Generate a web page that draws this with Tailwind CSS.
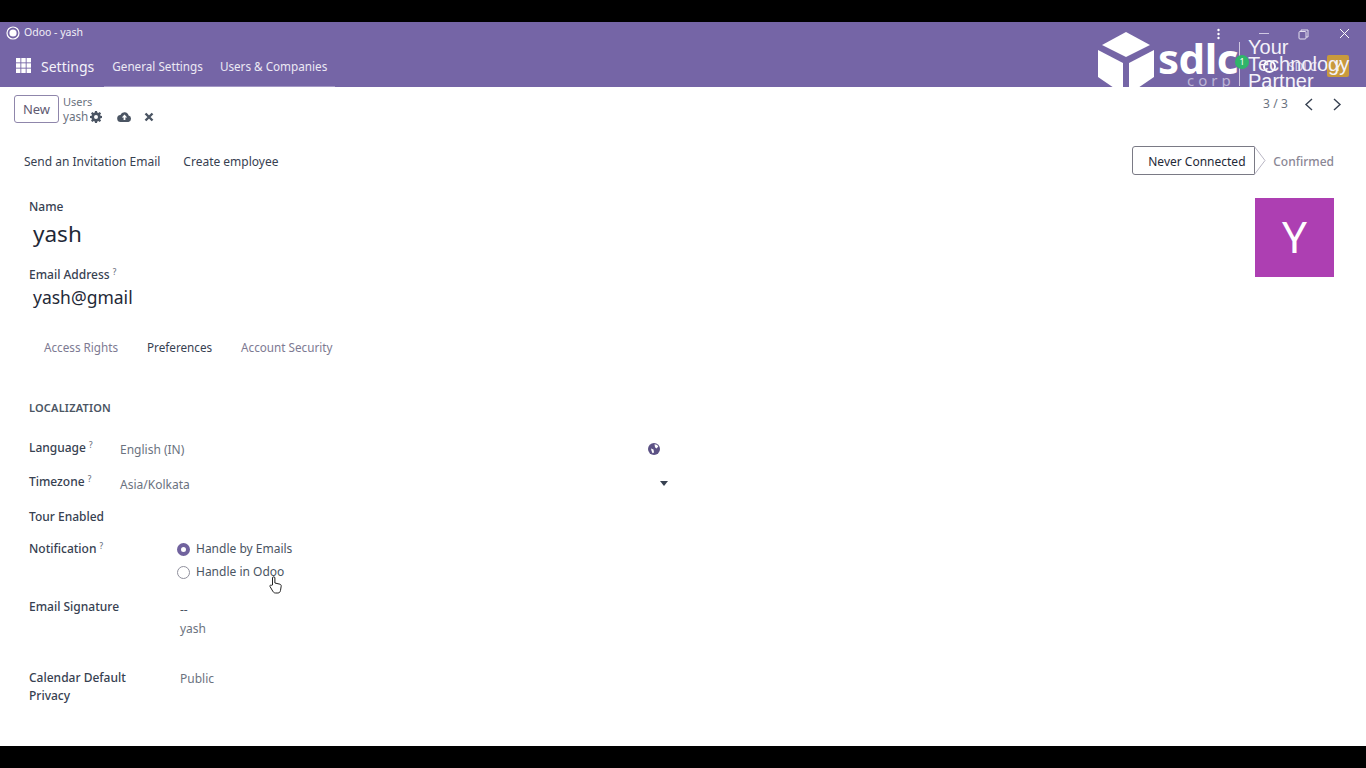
<!doctype html>
<html>
<head>
  <meta charset="UTF-8">
  <script src="https://cdn.jsdelivr.net/npm/@tailwindcss/browser@4"></script>
</head>
<body class="bg-black font-['Noto_Sans',sans-serif] text-[12px] text-[#374151]">
  <div class="w-[1366px] h-[768px] flex flex-col overflow-hidden">
    <div class="h-[22px] bg-black shrink-0"></div>

    <!-- title bar + odoo navbar -->
    <header class="relative h-[65px] shrink-0 bg-[#7565a6] text-white">
      <div class="h-[22px] flex items-center pl-[6px] gap-[4px] text-[10.5px] text-[#f1eef7]">
        <svg width="14" height="14" viewBox="0 0 14 14"><circle cx="7" cy="7" r="6" fill="none" stroke="#fff" stroke-width="1.2"/><circle cx="7" cy="7" r="3.6" fill="#fff"/></svg>
        <span>Odoo - yash</span>
      </div>
      <nav class="h-[43px] flex items-center pl-[16px] pt-[1px]">
        <svg class="-mt-[1px]" width="15" height="15" viewBox="0 0 15 15" fill="#fff">
          <rect x="0" y="0" width="4.4" height="4.4"/><rect x="5.3" y="0" width="4.4" height="4.4"/><rect x="10.6" y="0" width="4.4" height="4.4"/>
          <rect x="0" y="5.3" width="4.4" height="4.4"/><rect x="5.3" y="5.3" width="4.4" height="4.4"/><rect x="10.6" y="5.3" width="4.4" height="4.4"/>
          <rect x="0" y="10.6" width="4.4" height="4.4"/><rect x="5.3" y="10.6" width="4.4" height="4.4"/><rect x="10.6" y="10.6" width="4.4" height="4.4"/>
        </svg>
        <span class="ml-[10px] text-[14px] text-[#f4f2f9]">Settings</span>
        <span class="ml-[18px] text-[11.7px] pt-[1px] text-[#ece9f4]">General Settings</span>
        <span class="ml-[17px] text-[11.7px] pt-[1px] text-[#ece9f4]">Users &amp; Companies</span>
      </nav>
      <div class="absolute left-[104px] top-[64px] w-[231px] h-px bg-[#a297c4]"></div>

      <!-- window controls -->
      <svg class="absolute left-[1216px] top-[6px]" width="5" height="12" viewBox="0 0 5 12" fill="#fff"><circle cx="2.5" cy="2" r="1.2"/><circle cx="2.5" cy="6" r="1.2"/><circle cx="2.5" cy="10" r="1.2"/></svg>
      <div class="absolute left-[1259px] top-[11px] w-[10px] h-px bg-[#cfc8e2]"></div>
      <svg class="absolute left-[1298px] top-[7px]" width="11" height="11" viewBox="0 0 11 11" fill="none" stroke="#e4e0ef"><rect x="1" y="2.5" width="7" height="7.5" rx="1"/><path d="M3 2.5V1h7v7H8"/></svg>
      <svg class="absolute left-[1339px] top-[6px]" width="11" height="11" viewBox="0 0 11 11" stroke="#fff" stroke-width="1"><path d="M1 1l9 9M10 1l-9 9"/></svg>

      <!-- video watermark over the navbar -->
      <div class="absolute inset-0 overflow-hidden">
        <svg class="absolute left-[1097px] top-[10px]" width="58" height="58" viewBox="0 0 58 58" fill="#fff">
          <path d="M29 0L53 13 29 25 5 13z"/>
          <path d="M1 18l25 13v27H20L1 45z"/>
          <path d="M57 18L32 31v27h6l19-13z"/>
        </svg>
        <span class="absolute left-[1158px] top-[12px] text-[42px] leading-[48px] font-bold tracking-[-0.5px] text-white">sdlc</span>
        <span class="absolute left-[1187px] top-[49px] text-[15px] leading-[18px] tracking-[4px] text-[#bdb5d6]">corp</span>
        <div class="absolute left-[1239px] top-[20px] w-px h-[44px] bg-[#cfc8e2]"></div>
        <svg class="absolute left-[1262px] top-[37px]" width="15" height="15" viewBox="0 0 15 15" fill="none" stroke="#fff" stroke-width="2"><circle cx="7.5" cy="7.5" r="5.5"/></svg>
        <span class="absolute left-[1288px] top-[38px] text-[12px] leading-[14px] text-[#d9d4e8]">SDLC</span>
        <div class="absolute left-[1327px] top-[33px] w-[22px] h-[22px] rounded-[2px] bg-[#c99a3c] text-[13px] leading-[22px] text-center text-white">Y</div>
        <span class="absolute left-[1248px] top-[17px] text-[20px] leading-[17px] text-[#f4f2f9] font-['Liberation_Sans',sans-serif]">Your<br>Technology<br>Partner</span>
        <div class="absolute left-[1235px] top-[33px] w-[14px] h-[14px] rounded-full bg-[#2fb56a] text-[9px] leading-[14px] text-center text-white">1</div>
      </div>
    </header>

    <!-- page -->
    <main class="flex-1 bg-white relative">
      <!-- control panel -->
      <div class="h-[58px] flex items-start pl-[14px] pr-[24px] pt-[8px]">
        <button class="w-[45px] h-[28px] border border-[#8f86ab] rounded-[3px] text-[#5f5a72] text-[13px] pt-[1px]">New</button>
        <div class="ml-[4px] -mt-[1px] leading-[15px]">
          <div class="text-[11px] text-[#6b7280]">Users</div>
          <div class="flex items-center text-[11.7px] text-[#6b7280]">
            <span>yash</span>
            <svg class="ml-[2px]" width="12" height="12" viewBox="0 0 12 12" fill="#4b5563"><path fill-rule="evenodd" d="M5 0h2l.3 1.6 1 .4L9.7 1l1.4 1.4-1 1.4.4 1 1.5.2v2l-1.5.3-.4 1 1 1.3-1.4 1.4-1.4-1-1 .4L7 12H5l-.3-1.6-1-.4-1.3 1-1.4-1.4 1-1.3-.4-1L0 7V5l1.6-.2.4-1L1 2.4 2.4 1l1.3 1 1-.4zM6 4a2 2 0 100 4 2 2 0 000-4z"/></svg>
            <svg class="ml-[15px]" width="15" height="12" viewBox="0 0 15 12" fill="#4b5563"><path fill-rule="evenodd" d="M4 11a3.5 3.5 0 01-.6-7A4.3 4.3 0 0111.6 4.6 3.3 3.3 0 0111.5 11zM7.5 3.5L4.8 6.6h1.8V9h1.8V6.6h1.8z"/></svg>
            <svg class="ml-[12px]" width="10" height="10" viewBox="0 0 10 10" stroke="#4b5563" stroke-width="2.4"><path d="M1.5 1.5l7 7M8.5 1.5l-7 7"/></svg>
          </div>
        </div>
        <div class="ml-auto flex items-center text-[#6b7280]">
          <span class="text-[12px] tracking-[0.1px]">3 / 3</span>
          <svg class="ml-[16px]" width="10" height="13" viewBox="0 0 10 13" fill="none" stroke="#374151" stroke-width="1.4"><path d="M8 1L2 6.5 8 12"/></svg>
          <svg class="ml-[18px]" width="10" height="13" viewBox="0 0 10 13" fill="none" stroke="#374151" stroke-width="1.4"><path d="M2 1l6 5.5L2 12"/></svg>
        </div>
      </div>

      <!-- status bar -->
      <div class="h-[46px] flex items-start pl-[24px] pr-[32px]">
        <div class="pt-[8px] flex gap-[23px] text-[#374151] text-[12px] leading-[18px]">
          <span>Send an Invitation Email</span>
          <span>Create employee</span>
        </div>
        <div class="ml-auto flex items-center h-[30px] pt-[1px]">
          <div class="w-[123px] h-[29px] border border-[#7a7a85] rounded-l-[3px] text-[#1f2937] text-[12px] flex items-center pl-[15px] pt-[2px]">Never Connected</div>
          <svg class="-ml-px" width="12" height="29" viewBox="0 0 12 29" fill="none" stroke="#b9b6c4"><path d="M0 0l11 14.5L0 29"/></svg>
          <span class="ml-[7px] pt-[2px] text-[12px] text-[#8a8795] font-medium">Confirmed</span>
        </div>
      </div>

      <!-- sheet -->
      <section class="relative pl-[29px]">
        <div class="absolute left-[1255px] top-[7px] w-[79px] h-[79px] bg-[#ad3fb2] text-white text-[44px] leading-[77px] text-center">Y</div>

        <div class="pt-[7px] text-[12px] leading-[18px] font-medium text-[#374151]">Name</div>
        <div class="pl-[4px] text-[22.5px] leading-[36px] text-[#1f2937]">yash</div>
        <div class="mt-[14px] text-[12px] leading-[18px] font-medium text-[#374151]">Email Address <sup class="text-[8px] text-[#6b7280]">?</sup></div>
        <div class="pl-[4px] text-[17.5px] leading-[26px] text-[#1f2937]">yash@gmail</div>

        <!-- tabs -->
        <div class="mt-[28px] pl-[15px] flex gap-[29px] text-[11.7px] leading-[18px] text-[#7d7a92]">
          <span>Access Rights</span>
          <span class="text-[#374151]">Preferences</span>
          <span>Account Security</span>
        </div>

        <h3 class="mt-[44px] text-[11px] leading-[16px] font-semibold tracking-[0.2px] text-[#4b5563]">LOCALIZATION</h3>

        <div class="mt-[23px] w-[640px] relative text-[12px] leading-[18px]">
          <div class="flex h-[34px]">
            <span class="w-[91px] font-medium">Language <sup class="text-[8px] text-[#6b7280]">?</sup></span>
            <span class="text-[#6b7280] pt-[2px]">English (IN)</span>
            <svg class="absolute left-[619px] top-[4px]" width="12" height="12" viewBox="0 0 12 12"><circle cx="6" cy="6" r="6" fill="#5c5285"/><path d="M6.5 1.2c1.6 0 3 .9 3.8 2.3L8.5 5.5 7 4.3zM3 5.5l2.5 1 .5 3-1.5.8-1-2.6z" fill="#fff"/></svg>
          </div>
          <div class="flex h-[35px]">
            <span class="w-[91px] font-medium">Timezone <sup class="text-[8px] text-[#6b7280]">?</sup></span>
            <span class="text-[#6b7280] pt-[3px]">Asia/Kolkata</span>
            <svg class="absolute left-[631px] top-[42px]" width="8" height="5" viewBox="0 0 8 5" fill="#374151"><path d="M0 0h8L4 5z"/></svg>
          </div>
          <div class="h-[32px] font-medium">Tour Enabled</div>
          <div class="flex h-[58px]">
            <span class="w-[148px] font-medium">Notification <sup class="text-[8px] text-[#6b7280]">?</sup></span>
            <div class="flex flex-col gap-[5px] text-[#4b5563]">
              <label class="flex items-center gap-[6px]"><span class="w-[13px] h-[13px] rounded-full border-[4px] border-[#71639e] bg-white"></span>Handle by Emails</label>
              <label class="flex items-center gap-[6px]"><span class="w-[13px] h-[13px] rounded-full border border-[#8f8f9c] bg-white"></span>Handle in Odoo</label>
            </div>
          </div>
          <div class="flex h-[71px]">
            <span class="w-[151px] font-medium">Email Signature</span>
            <div class="text-[#4b5563] pt-[2px] leading-[19px]">--<br><span class="text-[#6b7280]">yash</span></div>
          </div>
          <div class="flex">
            <span class="w-[151px] font-medium">Calendar Default<br>Privacy</span>
            <span class="text-[#6b7280] pt-[1px]">Public</span>
          </div>
        </div>

        <!-- mouse pointer from the recording -->
        <svg class="absolute left-[269px] top-[385px]" width="13" height="18" viewBox="0 0 13 18" fill="#fff" stroke="#222" stroke-width="1"><path d="M3.5 9V2a1.2 1.2 0 012.4 0v5l5 1.2c1 .3 1.4 1 1.3 2l-.7 4.2c-.2 1.4-1 2.6-2.6 2.6H6.5c-1.2 0-2-.6-2.6-1.6L1 10.5c-.5-1 .8-2 1.6-1.2z"/></svg>
      </section>
    </main>

    <div class="h-[22px] bg-black shrink-0"></div>
  </div>
</body>
</html>
